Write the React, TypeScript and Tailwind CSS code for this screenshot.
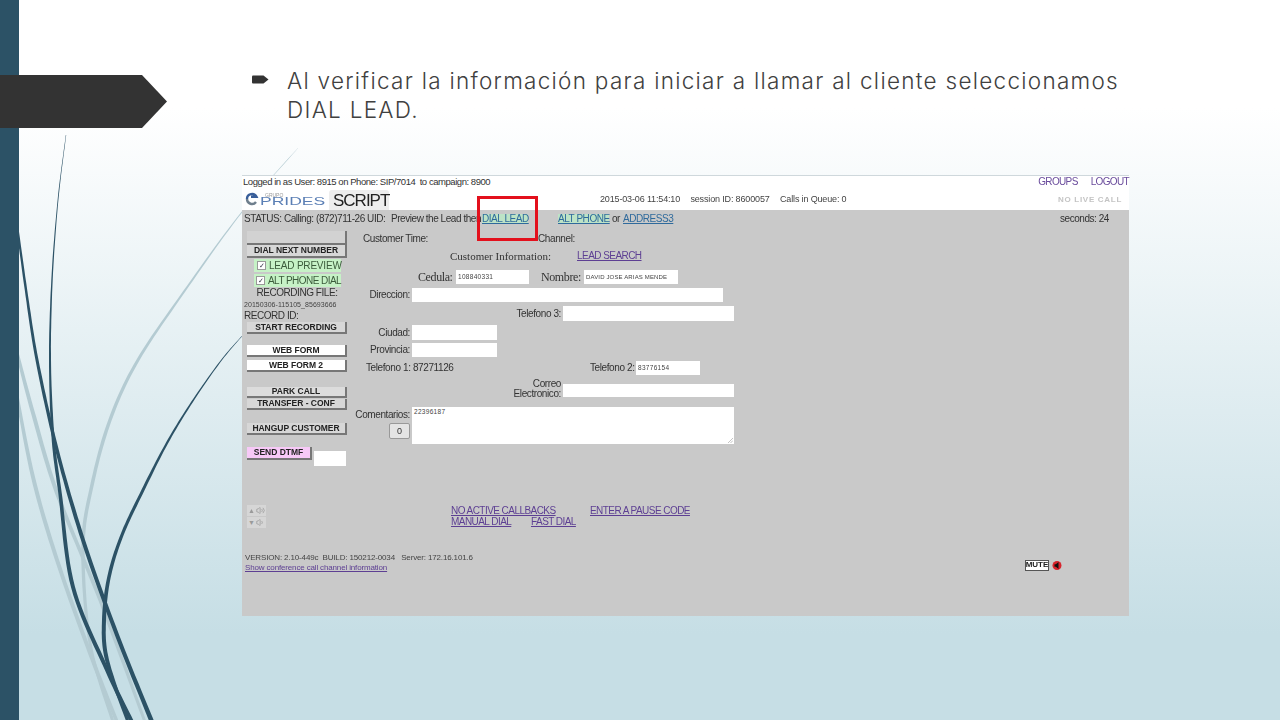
import React from 'react';
import { Volume1, Volume2 } from 'lucide-react';

type Pt = [number, number, number];

// tapered ribbon through points [x, y, width]
const ribbon = (pts: Pt[]) => {
  const samples: Pt[] = [];
  for (let i = 0; i < pts.length - 1; i++) {
    const p0 = pts[Math.max(i - 1, 0)];
    const p1 = pts[i];
    const p2 = pts[i + 1];
    const p3 = pts[Math.min(i + 2, pts.length - 1)];
    for (let s = 0; s < 12; s++) {
      const t = s / 12;
      const cr = (a: number, b: number, c: number, d: number) =>
        0.5 * (2 * b + (c - a) * t + (2 * a - 5 * b + 4 * c - d) * t * t + (3 * b - a - 3 * c + d) * t * t * t);
      samples.push([cr(p0[0], p1[0], p2[0], p3[0]), cr(p0[1], p1[1], p2[1], p3[1]), p1[2] + (p2[2] - p1[2]) * t]);
    }
  }
  samples.push(pts[pts.length - 1]);
  const left: string[] = [];
  const right: string[] = [];
  samples.forEach((p, i) => {
    const a = samples[Math.max(i - 1, 0)];
    const b = samples[Math.min(i + 1, samples.length - 1)];
    const dx = b[0] - a[0];
    const dy = b[1] - a[1];
    const len = Math.hypot(dx, dy) || 1;
    const nx = (-dy / len) * (p[2] / 2);
    const ny = (dx / len) * (p[2] / 2);
    left.push(`${(p[0] + nx).toFixed(1)} ${(p[1] + ny).toFixed(1)}`);
    right.unshift(`${(p[0] - nx).toFixed(1)} ${(p[1] - ny).toFixed(1)}`);
  });
  return `M${left.join('L')}L${right.join('L')}Z`;
};

const darkCurves: Pt[][] = [
  [[66, 135, 0.4], [58, 200, 0.8], [52, 280, 1.4], [50, 360, 2], [53, 437, 3], [60, 493, 3.5], [73, 587, 4], [107, 670, 4], [132, 722, 4]],
  [[15, 210, 2], [26, 290, 2.5], [37, 360, 3], [57, 450, 3.5], [83, 540, 4], [117, 635, 4], [152, 722, 4.5]],
  [[242, 336, 0.4], [220, 362, 1], [192, 402, 1.6], [167, 443, 2.2], [143, 490, 3], [122, 535, 3.2], [109, 577, 3.5], [104, 620, 4], [107, 660, 4], [128, 722, 3]],
];

const lightCurves: Pt[][] = [
  [[298, 148, 0.3], [242, 212, 1], [188, 286, 2], [138, 360, 3], [110, 420, 3.5], [92, 485, 3.5], [83, 547, 3.5], [90, 643, 3], [113, 722, 3]],
  [[15, 345, 3], [33, 413, 4], [57, 493, 4], [100, 600, 3.5], [145, 722, 3]],
  [[15, 385, 3], [33, 477, 4], [57, 560, 4], [90, 653, 4], [117, 722, 3.5]],
];

const Btn = ({ label, className = '' }: { label: string; className?: string }) => (
  <div className={`flex items-center justify-center border-r-2 border-b-2 border-[#777] text-[8.5px] leading-none font-bold tracking-[-0.02px] whitespace-nowrap text-[#222] ${className}`}>
    {label}
  </div>
);

const Field = ({ className = '', value = '' }: { className?: string; value?: string }) => (
  <div className={`flex items-center bg-white pl-[2px] text-[6.5px] leading-none tracking-[0.3px] text-[#444] ${className}`}>{value}</div>
);

const A = ({ children, className = '' }: { children: React.ReactNode; className?: string }) => (
  <span className={`text-[10px] leading-none tracking-[-0.55px] whitespace-nowrap text-[#5d3f93] underline ${className}`}>{children}</span>
);

const Label = ({ children, className = '' }: { children: React.ReactNode; className?: string }) => (
  <div className={`text-[10px] leading-none tracking-[-0.4px] whitespace-nowrap text-[#333] ${className}`}>{children}</div>
);

const App = () => {
  return (
    <div className="relative flex h-[720px] w-[1280px] overflow-hidden bg-[linear-gradient(180deg,#ffffff_15%,#c6dee5_88%)] font-['Liberation_Sans',sans-serif]">
      <svg className="absolute inset-0" width="1280" height="720" viewBox="0 0 1280 720">
        {lightCurves.map((c, i) => <path key={i} d={ribbon(c)} fill="#b4cbd2" />)}
        {darkCurves.map((c, i) => <path key={i} d={ribbon(c)} fill="#2c5266" />)}
      </svg>

      <div className="relative w-[19px] shrink-0 bg-[#2c5266]" />

      {/* title tag */}
      <div className="absolute top-[75px] left-0 h-[53px] w-[167px] bg-[#333333] [clip-path:polygon(0_0,142px_0,100%_50%,142px_100%,0_100%)]" />

      <main className="relative flex-1 pl-[223px]">
        <div className="flex pt-[66px] pl-[10px]">
          <svg className="mt-[9px] shrink-0" width="17" height="9" viewBox="0 0 17 9">
            <path d="M0 1.5 Q0 .5 1 .5 H11.5 L16.5 4.5 L11.5 8.5 H1 Q0 8.5 0 7.5Z" fill="#333" />
          </svg>
          <p className="ml-[18px] w-[845px] font-['Inter',sans-serif] text-[22.5px] leading-[29px] font-light tracking-[1.28px] text-[#404040]">
            Al verificar la información para iniciar a llamar al cliente seleccionamos DIAL LEAD.
          </p>
        </div>

        <section className="mt-[51px] flex h-[441px] w-[887px] flex-col border-t border-[#cfd8dc] blur-[0.35px]">
          {/* white header */}
          <div className="flex h-[34px] shrink-0 bg-white">
            <div className="w-[87px]">
              <div className="pl-[1px] text-[9.5px] leading-[11px] tracking-[-0.45px] whitespace-nowrap text-[#333]">Logged in as User: 8915 on Phone: SIP/7014&nbsp; to campaign: 8900</div>
              <div className="mt-[5px] flex items-center pl-[3px]">
                <svg width="14" height="14" viewBox="0 0 14 14" className="shrink-0">
                  <path d="M2 7a5 5 0 0 1 9.5-2.2H6" fill="none" stroke="#3a5f9a" strokeWidth="2.4" />
                  <path d="M2 7a5 5 0 0 0 9 3" fill="none" stroke="#6f7f8d" strokeWidth="2.4" />
                </svg>
                <div className="ml-[1px] flex flex-col">
                  <span className="pl-[5px] text-[5px] leading-[5px] text-[#999]">GRUPO</span>
                  <span className="origin-left scale-x-[1.75] text-[10px] leading-[8px] text-[#5b7fb5]">PRIDES</span>
                </div>
              </div>
            </div>
            <div className="mt-[14px] h-[20px] w-[60px] rounded-t-[3px] bg-[#ededed] pl-[4px] text-[17px] leading-[21px] tracking-[-1px] text-[#222]">SCRIPT</div>
            <div className="ml-[211px] pt-[18px] text-[9px] leading-[11px] tracking-[-0.15px] whitespace-nowrap text-[#444]">
              2015-03-06 11:54:10 <span className="ml-[8px]">session ID: 8600057</span> <span className="ml-[8px]">Calls in Queue: 0</span>
            </div>
            <div className="ml-auto flex w-[100px] flex-col items-end">
              <div className="flex gap-[13px] text-[10px] leading-[11px] tracking-[-0.65px] text-[#6a4c9c]">
                <span>GROUPS</span>
                <span>LOGOUT</span>
              </div>
              <div className="mt-[8px] pr-[7px] text-[8px] leading-[10px] font-bold tracking-[0.7px] text-[#c4c4c4]">NO LIVE CALL</div>
            </div>
          </div>

          {/* grey body */}
          <div className="flex min-h-0 flex-1 flex-col bg-[#c9c9c9]">
            <div className="flex h-[21px] shrink-0 items-center pb-[3px] pl-[2px] text-[10px] leading-none tracking-[-0.45px] whitespace-nowrap text-[#333]">
              <span className="w-[147px]">STATUS: Calling: (872)711-26 UID:</span>
              <span className="w-[91px]">Preview the Lead then</span>
              <span className="w-[46px] bg-[#bde3c6] text-[#2f6a9c] underline">DIAL LEAD</span>
              <span className="ml-[30px] w-[51px] bg-[#bde3c6] text-[#2f6a9c] underline">ALT PHONE</span>
              <span className="mx-[3px]">or</span>
              <span className="w-[49px] text-[#2f6a9c] underline">ADDRESS3</span>
              <span className="ml-[388px]">seconds: 24</span>
            </div>

            <div className="flex h-[322px] shrink-0">
              {/* button column */}
              <div className="w-[105px] shrink-0 pl-[5px] text-[#333]">
                <Btn label="" className="h-[14px] w-[100px] bg-[#d2d2d2]" />
                <Btn label="DIAL NEXT NUMBER" className="h-[13px] w-[100px] bg-[#d7d7d7]" />
                <div className="mt-[1px] ml-[7px] flex h-[13px] w-[87px] items-center bg-[#c6f2c6] pl-[3px] text-[10px] leading-none tracking-[-0.2px] whitespace-nowrap">
                  <span className="mr-[3px] flex h-[9px] w-[9px] shrink-0 items-center justify-center border border-[#999] bg-white text-[7px] leading-none text-[#334]">✓</span>
                  <span className="text-[#3b5b3b]">LEAD PREVIEW</span>
                </div>
                <div className="mt-[2px] ml-[7px] flex h-[13px] w-[87px] items-center bg-[#c6f2c6] pl-[2px] text-[10px] leading-none tracking-[-0.55px] whitespace-nowrap">
                  <span className="mr-[3px] flex h-[9px] w-[9px] shrink-0 items-center justify-center border border-[#999] bg-white text-[7px] leading-none text-[#334]">✓</span>
                  <span className="text-[#3b5b3b]">ALT PHONE DIAL</span>
                </div>
                <div className="h-[12px] text-center text-[10px] leading-[12px] tracking-[-0.45px]">RECORDING FILE:</div>
                <div className="-ml-[3px] h-[11px] text-[7px] leading-[11px] tracking-[0.05px] whitespace-nowrap text-[#444]">20150306-115105_85693666</div>
                <div className="-ml-[3px] h-[11px] text-[10px] leading-[11px] tracking-[-0.45px]">RECORD ID:</div>
                <div className="h-[1px]" />
                <Btn label="START RECORDING" className="h-[12px] w-[100px] bg-[#d7d7d7]" />
                <Btn label="WEB FORM" className="mt-[11px] h-[12px] w-[100px] bg-white" />
                <Btn label="WEB FORM 2" className="mt-[3px] h-[12px] w-[100px] bg-white" />
                <Btn label="PARK CALL" className="mt-[15px] h-[11px] w-[100px] bg-[#dcdcdc]" />
                <Btn label="TRANSFER - CONF" className="mt-[1px] h-[11px] w-[100px] bg-[#d7d7d7]" />
                <Btn label="HANGUP CUSTOMER" className="mt-[13px] h-[12px] w-[100px] bg-[#d7d7d7]" />
                <div className="mt-[12px] flex items-start">
                  <Btn label="SEND DTMF" className="h-[13px] w-[65px] bg-[#f7c9f7]" />
                  <div className="mt-[4px] ml-[2px] h-[15px] w-[32px] bg-white" />
                </div>
                <div className="mt-[39px] flex w-[19px] flex-col gap-[1px] text-[#9a9a9a]">
                  <div className="flex h-[11px] items-center gap-[1px] bg-[#d6d6d6] pl-[1px] text-[7px] leading-none">▲<Volume2 size={9} /></div>
                  <div className="flex h-[11px] items-center gap-[1px] bg-[#d6d6d6] pl-[1px] text-[7px] leading-none">▼<Volume1 size={9} /></div>
                </div>
              </div>

              {/* form column */}
              <div className="min-w-0 flex-1">
                <div className="flex h-4 items-center">
                  <Label className="ml-[16px] w-[175px]">Customer Time:</Label>
                  <Label>Channel:</Label>
                </div>
                <div className="mt-[1px] flex h-4 items-center">
                  <Label className="ml-[103px] w-[127px] font-['Liberation_Serif',serif] text-[11px] tracking-[0px]">Customer Information:</Label>
                  <A>LEAD SEARCH</A>
                </div>
                <div className="mt-[6px] flex h-[14px] items-center">
                  <Label className="ml-[71px] w-[38px] font-['Liberation_Serif',serif] text-[12px] tracking-[-0.2px]">Cedula:</Label>
                  <Field className="h-[14px] w-[73px]" value="108840331" />
                  <Label className="ml-[12px] w-[43px] font-['Liberation_Serif',serif] text-[12px] tracking-[-0.2px]">Nombre:</Label>
                  <Field className="h-[14px] w-[94px] text-[6px] tracking-[0.15px] whitespace-nowrap" value="DAVID JOSE ARIAS MENDE" />
                </div>
                <div className="mt-[4px] flex h-[14px] items-center">
                  <Label className="w-[63px] text-right">Direccion:</Label>
                  <Field className="ml-[2px] h-[14px] w-[311px]" />
                </div>
                <div className="mt-[4px] flex h-[15px] items-center">
                  <Label className="w-[214px] text-right">Telefono 3:</Label>
                  <Field className="ml-[2px] h-[15px] w-[171px]" />
                </div>
                <div className="mt-[4px] flex h-[15px] items-center">
                  <Label className="w-[63px] text-right">Ciudad:</Label>
                  <Field className="ml-[2px] h-[15px] w-[85px]" />
                </div>
                <div className="mt-[3px] flex h-[14px] items-center">
                  <Label className="w-[63px] text-right">Provincia:</Label>
                  <Field className="ml-[2px] h-[14px] w-[85px]" />
                </div>
                <div className="mt-[4px] flex h-[14px] items-center">
                  <Label className="ml-[19px] w-[224px]">Telefono 1: 87271126</Label>
                  <Label className="w-[46px]">Telefono 2:</Label>
                  <Field className="h-[14px] w-[64px]" value="83776154" />
                </div>
                <div className="mt-[3px] flex h-[26px]">
                  <Label className="w-[214px] pt-[1px] text-right leading-[12px]">Correo<br />Electronico:</Label>
                  <Field className="mt-[6px] ml-[2px] h-[13px] w-[171px]" />
                </div>
                <div className="mt-[3px] flex h-[37px]">
                  <div className="flex w-[63px] flex-col items-end">
                    <Label className="mt-[3px] text-right">Comentarios:</Label>
                    <div className="mt-[3px] flex h-[16px] w-[21px] items-center justify-center rounded-[2px] border border-[#999] bg-[#e4e4e4] text-[9px] leading-none text-[#333]">0</div>
                  </div>
                  <div className="relative ml-[2px] h-[37px] w-[322px] bg-white pt-[2px] pl-[2px] text-[6.5px] leading-none tracking-[0.3px] text-[#444]">
                    22396187
                    <svg className="absolute right-[1px] bottom-[1px]" width="6" height="6" viewBox="0 0 6 6">
                      <path d="M1 6 6 1M3.5 6 6 3.5" stroke="#aaa" strokeWidth=".7" />
                    </svg>
                  </div>
                </div>
                <div className="mt-[61px] flex h-[11px] items-center">
                  <A className="ml-[104px] w-[139px]">NO ACTIVE CALLBACKS</A>
                  <A>ENTER A PAUSE CODE</A>
                </div>
                <div className="flex h-[11px] items-center">
                  <A className="ml-[104px] w-[80px]">MANUAL DIAL</A>
                  <A>FAST DIAL</A>
                </div>
              </div>
            </div>

            {/* version and mute */}
            <div className="flex items-start pl-[3px]">
              <div className="w-[780px] text-[8px] leading-[10px] tracking-[-0.15px] whitespace-nowrap text-[#444]">
                <div>VERSION: 2.10-449c &nbsp;BUILD: 150212-0034 &nbsp;&nbsp;Server: 172.16.101.6</div>
                <div className="text-[#5d3f93] underline">Show conference call channel information</div>
              </div>
              <div className="mt-[6px] flex h-[12px] items-center">
                <span className="flex h-[11px] w-[24px] items-center justify-center border border-[#555] bg-white text-[8px] leading-none font-bold text-[#222]">MUTE</span>
                <svg className="ml-[3px]" width="10" height="11" viewBox="0 0 10 11">
                  <circle cx="5" cy="5.5" r="4.5" fill="#d8242c" />
                  <path d="M2.5 4.2h1.4L6.5 2v7L3.9 6.8H2.5Z" fill="#111" />
                </svg>
              </div>
            </div>
          </div>
        </section>

        {/* highlight round DIAL LEAD */}
        <div className="absolute top-[196px] left-[458px] h-[45px] w-[61px] border-[3px] border-[#e3101c]" />
      </main>
    </div>
  );
};

export default App;
